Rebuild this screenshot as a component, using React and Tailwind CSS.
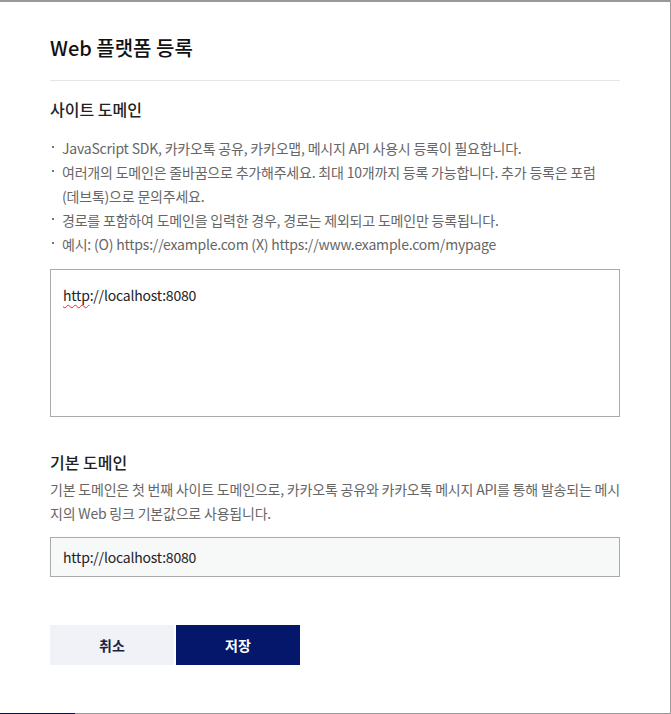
const notes = [
    "JavaScript SDK, 카카오톡 공유, 카카오맵, 메시지 API 사용시 등록이 필요합니다.",
    "여러개의 도메인은 줄바꿈으로 추가해주세요. 최대 10개까지 등록 가능합니다. 추가 등록은 포럼(데브톡)으로 문의주세요.",
    "경로를 포함하여 도메인을 입력한 경우, 경로는 제외되고 도메인만 등록됩니다.",
    "예시: (O) https://example.com (X) https://www.example.com/mypage",
];

export default function App() {
    return (
        <div className="w-[671px] h-[714px] bg-white border-t-2 border-r border-[#999] flex flex-col font-['Noto_Sans_CJK_KR',sans-serif]">
            <div className="flex-1 px-[50px] pt-[32px] flex flex-col">
                <h1 className="text-[20px] leading-[28px] font-medium text-[#111]">
                    Web 플랫폼 등록
                </h1>
                <div className="mt-[18px] h-px bg-[#e5e5e5]" />

                <h2 className="mt-[16px] text-[16px] leading-[24px] font-medium text-[#222]">
                    사이트 도메인
                </h2>
                <ul className="mt-[15px] flex flex-col text-[14px] leading-[24px] tracking-[-0.2px] text-[#666]">
                    {notes.map((n) => (
                        <li key={n} className="flex">
                            <span className="w-[12px] shrink-0 flex pt-[10px] pl-[2px]">
                                <span className="w-[2px] h-[2px] bg-[#777]" />
                            </span>
                            <span className="flex-1 pr-[20px] break-keep">{n}</span>
                        </li>
                    ))}
                </ul>

                <div className="mt-[13px] h-[148px] border border-[#aaa] px-[12px] pt-[13px] text-[14px] leading-[24px] tracking-[-0.2px] text-[#222]">
                    <span className="underline decoration-wavy decoration-[#ff2424] decoration-1 underline-offset-[3px]">
                        http
                    </span>
                    ://localhost:8080
                </div>

                <h2 className="mt-[33px] text-[16px] leading-[24px] font-medium text-[#222]">
                    기본 도메인
                </h2>
                <p className="mt-[3px] text-[14px] leading-[24px] tracking-[-0.2px] text-[#666]">
                    기본 도메인은 첫 번째 사이트 도메인으로, 카카오톡 공유와 카카오톡 메시지 API를 통해 발송되는 메시지의 Web 링크 기본값으로 사용됩니다.
                </p>
                <div className="mt-[12px] h-[40px] border border-[#aaa] bg-[#f7f8f8] px-[12px] flex items-center text-[14px] tracking-[-0.2px] text-[#222]">
                    http://localhost:8080
                </div>

                <div className="mt-[48px] flex gap-[2px]">
                    <button className="w-[124px] h-[40px] bg-[#f1f2f8] text-[14px] font-bold text-[#1c1f3f]">
                        취소
                    </button>
                    <button className="w-[124px] h-[40px] bg-[#05176a] text-[14px] font-bold text-white">
                        저장
                    </button>
                </div>
            </div>
            <div className="flex h-px">
                <div className="w-[75px] bg-[#0a0f4a]" />
                <div className="flex-1 bg-[#999]" />
            </div>
        </div>
    );
}
